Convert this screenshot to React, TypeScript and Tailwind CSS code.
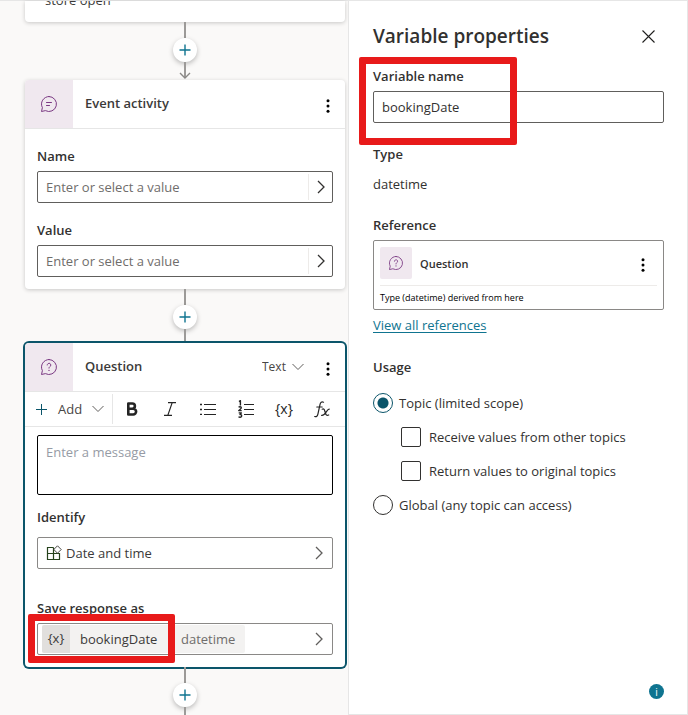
import React, { useState } from "react";

type IconProps = { className?: string };

function ChevronRight({ className = "" }: IconProps) {
  return (
    <svg className={className} width="8" height="14" viewBox="0 0 8 14" fill="none" stroke="currentColor" strokeWidth="1.3" aria-hidden="true">
      <path d="M1 1l6 6-6 6" />
    </svg>
  );
}

function ChevronDown({ className = "" }: IconProps) {
  return (
    <svg className={className} width="12" height="8" viewBox="0 0 12 8" fill="none" stroke="currentColor" strokeWidth="1" aria-hidden="true">
      <path d="M.5 1L6 6.500l5.500-5.500" />
    </svg>
  );
}

function MoreVertical() {
  return (
    <svg width="4" height="14" viewBox="0 0 4 14" fill="#000" aria-hidden="true">
      <circle cx="2" cy="1.700" r="1.500" />
      <circle cx="2" cy="7" r="1.500" />
      <circle cx="2" cy="12.300" r="1.500" />
    </svg>
  );
}

function Bubble({ size, children }: { size: number; children: React.ReactNode }) {
  return (
    <svg width={size} height={size} viewBox="0 0 16 16" fill="none" stroke="#7b3a83" strokeWidth="1" strokeLinecap="round" strokeLinejoin="round" aria-hidden="true">
      <path d="M8 .5a7.500 7.500 0 1 1-3.600 14.100L.5 15.500l.9-3.900A7.500 7.500 0 0 1 8 .5z" />
      {children}
    </svg>
  );
}

function MessageIcon() {
  return (
    <Bubble size={16}>
      <path d="M5.500 6.500h5M5.500 9.500h3" />
    </Bubble>
  );
}

function QuestionIcon({ size = 16 }: { size?: number }) {
  return (
    <Bubble size={size}>
      <path d="M6.200 6a1.800 1.800 0 1 1 2.700 1.600c-.6.4-.9.800-.9 1.500" />
      <path d="M8 11.300v.1" strokeWidth="1.300" />
    </Bubble>
  );
}

function PlusIcon({ className = "" }: IconProps) {
  return (
    <svg className={className} width="11" height="11" viewBox="0 0 11 11" fill="none" stroke="currentColor" strokeWidth="1" aria-hidden="true">
      <path d="M5.500 0v11M0 5.500h11" />
    </svg>
  );
}

function AddNode() {
  return (
    <button type="button" aria-label="Add node" className="flex size-6 shrink-0 items-center justify-center rounded-full bg-white text-[#0f7490] shadow-[0_2px_5px_rgba(0,0,0,0.25)]">
      <svg width="12" height="12" viewBox="0 0 12 12" fill="none" stroke="currentColor" strokeWidth="1.400" aria-hidden="true">
        <path d="M6 .5v11M.5 6h11" />
      </svg>
    </button>
  );
}

function Line({ className }: { className: string }) {
  return <div className={`w-0.5 bg-[#9c9a98] ${className}`} />;
}

function NodeHeader({ icon, title, children }: { icon: React.ReactNode; title: string; children?: React.ReactNode }) {
  return (
    <div className="flex h-[49px] items-stretch border-b border-[#e6e6e6]">
      <div className="flex w-12 items-center justify-center rounded-tl bg-[#f0e8ef]">{icon}</div>
      <h2 className="flex-1 self-center px-3 pb-0.5 text-[13px] leading-5 font-semibold text-[#3b3a39]">{title}</h2>
      {children}
      <button type="button" aria-label={`${title} options`} className="mr-px flex w-8 items-center justify-center pt-1">
        <MoreVertical />
      </button>
    </div>
  );
}

const labelClass = "mb-[5px] block text-[13px] leading-5 font-semibold text-[#323130]";

function ValueField({ id, label }: { id: string; label: string }) {
  return (
    <div>
      <label htmlFor={id} className={labelClass}>{label}</label>
      <div className="flex h-8 items-stretch rounded-xs border border-[#605e5c]">
        <input id={id} placeholder="Enter or select a value" className="min-w-0 flex-1 bg-transparent px-2 pt-0.5 text-[13px] outline-none placeholder:text-[#6f6d6b]" />
        <button type="button" aria-label={`Select ${label}`} className="my-0.5 flex w-6 items-center justify-center border-l border-[#edebe9] text-[#323130]">
          <ChevronRight />
        </button>
      </div>
    </div>
  );
}

function EntityIcon() {
  return (
    <svg width="16" height="16" viewBox="0 0 16 16" fill="none" strokeWidth="1" aria-hidden="true">
      <path d="M7.500 2.500h-6v12h12v-6h-12M7.500 2.500v12" stroke="#26421c" strokeWidth="1.200" />
      <path d="M11.500.8l3.700 3.700-3.700 3.700-3.700-3.700z" stroke="#484644" />
    </svg>
  );
}

function ToolButton({ label, children }: { label: string; children: React.ReactNode }) {
  return (
    <button type="button" aria-label={label} className="flex h-full flex-1 items-center justify-center text-[#242424]">
      {children}
    </button>
  );
}

function Toolbar() {
  return (
    <div className="flex h-[35px] items-center border-b border-[#e6e6e6]">
      <button type="button" className="my-1 flex h-[30px] w-[88px] items-center border-r border-[#e6e6e6] pl-[11px] text-[13px] text-[#484644]">
        <PlusIcon className="text-[#0b556a]" />
        <span className="ml-[11px] pt-0.5">Add</span>
        <ChevronDown className="ml-2.5 text-[#605e5c]" />
      </button>
      <div className="flex h-full min-w-0 flex-1 items-center pr-1">
        <ToolButton label="Bold">
          <svg width="12" height="14" viewBox="0 0 12 14" fill="none" stroke="currentColor" strokeWidth="2.600" strokeLinejoin="round" aria-hidden="true">
            <path d="M2.300 1.500h4a2.600 2.600 0 0 1 0 5.200h-4zM2.300 6.700h4.900a2.900 2.900 0 0 1 0 5.800H2.300z" />
          </svg>
        </ToolButton>
        <ToolButton label="Italic">
          <svg width="14" height="14" viewBox="0 0 14 14" fill="none" stroke="currentColor" strokeWidth="1.200" aria-hidden="true">
            <path d="M5 .6h8M1 13.400h8M9.200.6L4.800 13.400" />
          </svg>
        </ToolButton>
        <ToolButton label="Bulleted list">
          <svg width="16" height="12" viewBox="0 0 16 12" fill="none" stroke="currentColor" strokeWidth="1" aria-hidden="true">
            <path d="M4 1.500h12M4 6.500h12M4 11.500h12" />
            <path d="M0 1.500h2M0 6.500h2M0 11.500h2" strokeWidth="1.600" />
          </svg>
        </ToolButton>
        <ToolButton label="Numbered list">
          <svg width="16" height="18" viewBox="0 0 16 18" fill="none" stroke="currentColor" strokeWidth="1.400" strokeLinejoin="round" aria-hidden="true">
            <path d="M6 4.500h10M6 9.500h10M6 14.500h10" strokeWidth="1" />
            <path d="M1 1.600l1.400-1V5.500" />
            <path d="M.7 7.400c.5-.9 2.600-.9 2.600.4 0 1-1.500 1.600-2.600 2.800h3" />
            <path d="M.7 12.900h2.700L2 14.500c2.200-.2 2.200 2.700.1 2.700-.7 0-1.200-.2-1.500-.6" />
          </svg>
        </ToolButton>
        <ToolButton label="Insert variable">
          <span className="text-sm">{"{x}"}</span>
        </ToolButton>
        <ToolButton label="Insert formula">
          <svg width="16" height="17" viewBox="0 0 16 17" fill="none" stroke="currentColor" strokeWidth="1.200" strokeLinecap="round" aria-hidden="true">
            <path d="M9.500 1.200C7.600.4 6.500 1.400 6.100 3.200L3.900 13.200c-.4 1.900-1.400 2.900-3.200 2.300M2.800 6h5.400" />
            <path d="M8.200 8.200c2.200-1 2.400 1.400 3.100 3.600s1.400 3.200 3.400 2.200M15.200 8.100c-2.400-.3-3.500 6.800-7.600 6.200" />
          </svg>
        </ToolButton>
      </div>
    </div>
  );
}

function Canvas() {
  return (
    <main className="flex min-w-0 flex-1 flex-col items-center border-t border-[#e6e6e6] bg-[#faf9f8] pr-[3px] pl-[25px]">
      <section className="h-[21px] w-full shrink-0 overflow-hidden rounded-b bg-white px-5 shadow-[0_1px_4px_rgba(0,0,0,0.2)]">
        <p className="-mt-[11px] text-[13px] leading-5 text-[#3b3a39]">store open</p>
      </section>

      <Line className="h-4" />
      <AddNode />
      <div className="flex h-[18px] flex-col items-center pb-px">
        <svg width="12" height="17" viewBox="0 0 12 17" fill="none" stroke="#8a8886" aria-hidden="true">
          <path d="M6 0v16" strokeWidth="2" stroke="#9c9a98" />
          <path d="M1 11l5 5 5-5" strokeWidth="1.400" />
        </svg>
      </div>

      <section className="w-full rounded bg-white shadow-[0_1px_4px_rgba(0,0,0,0.2)]">
        <NodeHeader icon={<MessageIcon />} title="Event activity" />
        <div className="flex flex-col gap-[17px] px-3 pt-[17px] pb-3">
          <ValueField id="event-name" label="Name" />
          <ValueField id="event-value" label="Value" />
        </div>
      </section>

      <Line className="h-4" />
      <AddNode />
      <Line className="h-3.5" />

      <section className="w-full rounded bg-white ring-2 ring-[#0b556a]">
        <NodeHeader icon={<QuestionIcon />} title="Question">
          <div className="mr-2 grid items-center text-xs text-[#484644]">
            <select aria-label="Message type" defaultValue="Text" className="col-start-1 row-start-1 w-[42px] appearance-none bg-transparent outline-none">
              <option>Text</option>
            </select>
            <ChevronDown className="pointer-events-none col-start-1 row-start-1 justify-self-end text-[#605e5c]" />
          </div>
        </NodeHeader>
        <Toolbar />
        <div className="px-3 pt-2 pb-3">
          <textarea aria-label="Message" placeholder="Enter a message" className="mb-3 block h-[60px] w-full resize-none rounded-xs border border-black px-2 py-1.5 text-[13px] leading-5 outline-none placeholder:text-[#969ba5]" />
          <label htmlFor="identify" className="mb-2.5 block text-[13px] leading-5 font-semibold text-[#323130]">Identify</label>
          <button id="identify" type="button" className="mb-[29px] flex h-8 w-full items-center rounded-xs border border-[#8a8886] pr-[9px] pl-2 text-[13px] text-[#3b3a39]">
            <EntityIcon />
            <span className="ml-1 flex-1 pt-0.5 text-left">Date and time</span>
            <ChevronRight className="text-[#605e5c]" />
          </button>
          <label htmlFor="response" className={labelClass}>Save response as</label>
          <div className="relative">
            <button id="response" type="button" className="flex h-8 w-full items-center rounded-xs border border-[#8a8886] pr-[9px] pl-1 text-[13px]">
              <span className="flex h-7 items-center rounded-xs bg-[#f3f2f1] text-[#3b3a39]">
                <span className="flex h-full w-7 items-center justify-center rounded-l-xs bg-[#e1dfdd]">{"{x}"}</span>
                <span className="w-[101px] pt-0.5 pl-2.5 text-left">bookingDate</span>
                <span className="px-2.5 pt-0.5 text-[#6f6d6b]">datetime</span>
              </span>
              <ChevronRight className="ml-auto text-[#605e5c]" />
            </button>
            <div className="pointer-events-none absolute -top-[9px] -left-[9px] h-[49px] w-[147px] rounded-xs border-[7px] border-[#e81a1a]" />
          </div>
        </div>
      </section>

      <Line className="h-4" />
      <AddNode />
      <Line className="flex-1" />
    </main>
  );
}

const radioClass =
  "size-5 shrink-0 appearance-none rounded-full border border-[#323130] bg-white checked:border-[#0b556a] checked:bg-[radial-gradient(circle,#0b556a_5px,#fff_6px)]";
const checkClass = "size-5 shrink-0 appearance-none rounded-xs border border-[#323130] bg-white checked:bg-[#0b556a]";

function PropertiesPanel() {
  const [name, setName] = useState("bookingDate");
  const [scope, setScope] = useState("topic");
  return (
    <aside className="flex w-[340px] shrink-0 flex-col border border-[#e6e6e6] bg-white pr-[23px] pb-[15px] pl-6 text-[13px] leading-5 text-[#323130]">
      <header className="flex h-[60px] items-center justify-between pt-2.5">
        <h1 className="text-[19px] leading-7 font-semibold">Variable properties</h1>
        <button type="button" aria-label="Close" className="flex size-8 items-center justify-center">
          <svg width="13" height="13" viewBox="0 0 13 13" fill="none" stroke="#201f1e" strokeWidth="1.100" aria-hidden="true">
            <path d="M.5.5l12 12M12.500.5l-12 12" />
          </svg>
        </button>
      </header>

      <div className="relative pt-[5px]">
        <label htmlFor="variable-name" className={labelClass}>Variable name</label>
        <input id="variable-name" value={name} onChange={(e) => setName(e.target.value)} className="block h-8 w-full rounded-xs border border-[#605e5c] px-2 outline-none" />
        <div className="pointer-events-none absolute -top-1 -left-3.5 h-[88px] w-[158px] rounded-xs border-[7px] border-[#e81a1a]" />
      </div>

      <h2 className="mt-[21px] font-semibold">Type</h2>
      <p className="mt-2.5">datetime</p>

      <h2 className="mt-[21px] font-semibold">Reference</h2>
      <section className="mt-[5px] h-[70px] rounded-xs border border-[#8a8886] px-1.5 pt-1.5">
        <div className="flex h-[39px] items-start border-b border-[#edebe9]">
          <span className="flex size-8 items-center justify-center rounded-xs bg-[#f0e8ef]">
            <QuestionIcon size={14} />
          </span>
          <span className="flex h-8 flex-1 items-center pt-0.5 pl-2 text-[11px] font-semibold">Question</span>
          <button type="button" aria-label="Reference options" className="flex h-9 w-7 items-center justify-center">
            <MoreVertical />
          </button>
        </div>
        <p className="pt-0.5 text-[9px] text-black">Type (datetime) derived from here</p>
      </section>
      <a href="#references" className="mt-[5px] self-start text-[#0f7490] underline underline-offset-2">View all references</a>

      <fieldset className="mt-[22px]">
        <legend className="font-semibold">Usage</legend>
        <div className="flex flex-col gap-3.5 pt-4">
          <label className="flex items-center gap-1.5">
            <input type="radio" name="scope" checked={scope === "topic"} onChange={() => setScope("topic")} className={radioClass} />
            Topic (limited scope)
          </label>
          <label className="ml-7 flex items-center gap-2">
            <input type="checkbox" className={checkClass} />
            Receive values from other topics
          </label>
          <label className="ml-7 flex items-center gap-2">
            <input type="checkbox" className={checkClass} />
            Return values to original topics
          </label>
          <label className="flex items-center gap-1.5">
            <input type="radio" name="scope" checked={scope === "global"} onChange={() => setScope("global")} className={radioClass} />
            Global (any topic can access)
          </label>
        </div>
      </fieldset>

      <button type="button" aria-label="Information" className="mt-auto flex size-[15px] items-center justify-center self-end rounded-full bg-[#0f7490] text-[10px] leading-none text-white">
        i
      </button>
    </aside>
  );
}

export default function App() {
  return (
    <div className="flex min-h-screen bg-[#faf9f8] font-['Open_Sans','Noto_Sans',sans-serif]">
      <Canvas />
      <PropertiesPanel />
    </div>
  );
}
